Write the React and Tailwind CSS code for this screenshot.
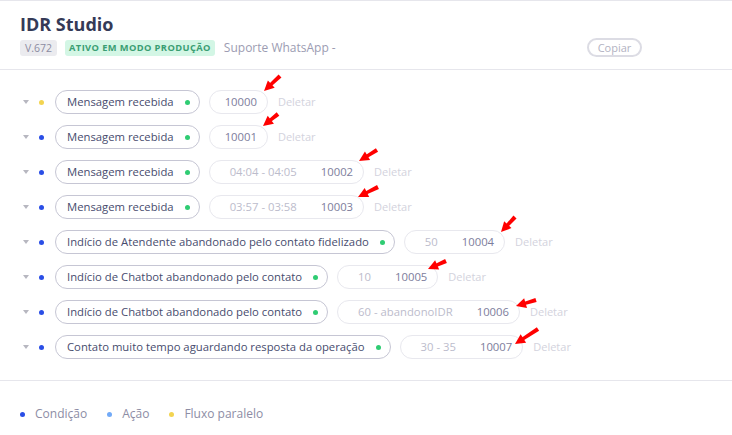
import React from "react";

/* ---------- data ---------- */
const ROWS = [
  { label: "Mensagem recebida", id: "10000", kind: "yellow", arrow: [16, -15], tip: [-2, 0] },
  { label: "Mensagem recebida", id: "10001", kind: "blue", arrow: [15, -12], tip: [-3, 0] },
  { label: "Mensagem recebida", id: "10002", range: "04:04 - 04:05", kind: "blue", arrow: [18, -11], tip: [-3, 0] },
  { label: "Mensagem recebida", id: "10003", range: "03:57 - 03:58", kind: "blue", arrow: [20, -10], tip: [-4, 1] },
  { label: "Indício de Atendente abandonado pelo contato fidelizado", id: "10004", range: "50", kind: "blue", arrow: [14, -15], tip: [-2, 1] },
  { label: "Indício de Chatbot abandonado pelo contato", id: "10005", range: "10", kind: "blue", arrow: [18, -8], tip: [-8, 3] },
  { label: "Indício de Chatbot abandonado pelo contato", id: "10006", range: "60 - abandonoIDR", kind: "blue", arrow: [20, -6], tip: [-2, 5] },
  { label: "Contato muito tempo aguardando resposta da operação", id: "10007", range: "30 - 35", kind: "blue", arrow: [23, -15], tip: [-6, 8] },
];

const DOT = {
  blue: "bg-[#2a4ee6]",
  light: "bg-[#72aaf7]",
  yellow: "bg-[#f3d451]",
};

/* red annotation arrow, tip sits at the svg origin */
const Arrow = ({ vec, tip }) => {
  const [dx, dy] = vec;
  const len = Math.hypot(dx, dy);
  const angle = (Math.atan2(dy, dx) * 180) / Math.PI;
  return (
    <svg
      width="1"
      height="1"
      className="pointer-events-none absolute overflow-visible"
      style={{ right: -tip[0], top: tip[1] }}
    >
      <g transform={`rotate(${angle})`}>
        <polygon points="0,0 10,-5 10,5" fill="#ff0000" />
        <polygon points={`8,-1.6 ${len},-2.1 ${len},2.1 8,1.6`} fill="#ff0000" />
      </g>
    </svg>
  );
};

const Row = ({ row }) => (
  <div className="flex h-6 items-center">
    <span className="ml-[23px] h-0 w-0 border-x-[3.5px] border-t-[4px] border-x-transparent border-t-[#b7b7c0]" />
    <span className={`ml-[10px] h-[5px] w-[5px] rounded-full ${DOT[row.kind]}`} />
    <div className="ml-[11px] flex h-6 items-center rounded-full border border-[#c6c6d4] pl-[11px] pr-[9px] text-[11.3px] text-[#474c6e]">
      <span>{row.label}</span>
      <span className="ml-[11px] h-[5px] w-[5px] rounded-full bg-[#2fcc73]" />
    </div>
    <div
      className={`relative ml-[9px] flex h-6 items-center rounded-full border border-[#e8e8ee] text-[11.3px] ${
        row.range ? "gap-[24px] pl-[20px] pr-[10px]" : "pl-[15px] pr-[10px]"
      }`}
    >
      {row.range && <span className="text-[#bcbccc]">{row.range}</span>}
      <span className="text-[#7d7d9c]">{row.id}</span>
      <Arrow vec={row.arrow} tip={row.tip} />
    </div>
    <span className="ml-[10px] text-[11px] text-[#d3d3dd]">Deletar</span>
  </div>
);

const Legend = ({ color, children }) => (
  <div className="flex items-center gap-[10px]">
    <span className={`h-[5px] w-[5px] rounded-full ${color}`} />
    <span>{children}</span>
  </div>
);

export default function App() {
  return (
    <div
      className="h-[435px] w-[732px] overflow-hidden bg-white"
      style={{ fontFamily: '"Open Sans", "Noto Sans", sans-serif' }}
    >
      {/* header */}
      <header className="border-y border-[#e6e6ec] px-5 pt-[10px] pb-[13px]">
        <h1 className="text-[18px] leading-[26px] font-bold text-[#353a57]">IDR Studio</h1>
        <div className="mt-[2px] flex h-[17px] items-center">
          <span className="rounded-[3px] bg-[#ebebef] px-[5px] text-[10.5px] leading-[16px] text-[#8b8ba2]">
            V.672
          </span>
          <span className="ml-[8px] rounded-[3px] bg-[#d3f6e5] px-[4px] text-[9.3px] leading-[16px] font-bold tracking-[0.4px] text-[#3a9e73]">
            ATIVO EM MODO PRODUÇÃO
          </span>
          <span className="ml-[9px] text-[12px] text-[#9c9cb2]">Suporte WhatsApp -</span>
          <button className="ml-auto mr-[70px] h-[19px] w-[55px] rounded-full border-2 border-[#dcdce4] text-[11px] leading-none text-[#b2b2c2]">
            Copiar
          </button>
        </div>
      </header>

      {/* rows */}
      <section className="flex flex-col gap-[11px] border-b border-[#e6e6ec] pt-[20px] pb-[21px]">
        {ROWS.map((row, i) => (
          <Row key={i} row={row} />
        ))}
      </section>

      {/* legend */}
      <footer className="flex items-center gap-[20px] pl-[20px] pt-[24px] text-[12px] text-[#8d8da5]">
        <Legend color={DOT.blue}>Condição</Legend>
        <Legend color={DOT.light}>Ação</Legend>
        <Legend color={DOT.yellow}>Fluxo paralelo</Legend>
      </footer>
    </div>
  );
}
